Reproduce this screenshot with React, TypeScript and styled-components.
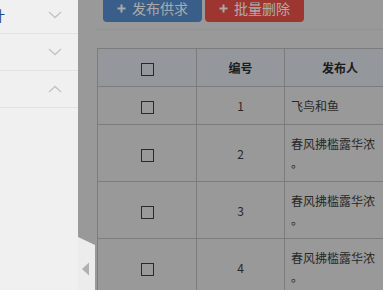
import React from "react";
import styled, { createGlobalStyle } from "styled-components";

const GlobalStyle = createGlobalStyle`
  html, body { margin: 0; padding: 0; }
  body {
    overflow: hidden;
    background: #dcdcdc;
    font-family: "Noto Sans CJK SC", "Noto Sans", sans-serif;
    width: 383px;
    height: 290px;
  }
`;

const Page = styled.main`
  padding-left: 97px;
  margin-top: -6px;
`;

const Toolbar = styled.div`
  display: flex;
  gap: 3px;
  padding: 0 0 7px 6px;
  border-bottom: 1px solid #d2d2d2;
`;

const ActionButton = styled.button<{ $tone: "primary" | "danger" }>`
  display: flex;
  align-items: center;
  justify-content: center;
  gap: 6px;
  width: 99px;
  height: 28px;
  padding: 0;
  border: none;
  border-radius: 4px;
  background: ${(p) => (p.$tone === "primary" ? "#5187c4" : "#e14c47")};
  color: #f4f4f4;
  font-family: inherit;
  font-size: 14px;
  line-height: 20px;
`;

const TableWrap = styled.div`
  padding-top: 18px;
`;

const Table = styled.table`
  width: 299px;
  table-layout: fixed;
  border-collapse: separate;
  border-spacing: 0;
  border-top: 1px solid #b2b2b2;
  border-left: 1px solid #b2b2b2;
  background: #dcdcdc;
`;

const Th = styled.th<{ $w: number }>`
  box-sizing: border-box;
  width: ${(p) => p.$w}px;
  padding: 9px 0;
  background: #d5dae0;
  border-right: 1px solid #b2b2b2;
  border-bottom: 1px solid #b2b2b2;
  color: #2a2a2a;
  font-size: 12px;
  font-weight: 700;
  line-height: 19px;
  text-align: center;
`;

const Td = styled.td<{ $align?: "left" | "center" }>`
  box-sizing: border-box;
  padding: ${(p) => (p.$align === "left" ? "9px 9px 9px 6px" : "9px 0")};
  border-right: 1px solid #b2b2b2;
  border-bottom: 1px solid #b2b2b2;
  color: #3a3a3a;
  font-size: 12px;
  line-height: 19px;
  text-align: ${(p) => p.$align ?? "center"};
  vertical-align: middle;
  line-break: anywhere;
`;

const Check = styled.span`
  display: inline-block;
  box-sizing: border-box;
  width: 13px;
  height: 13px;
  border: 1px solid #3c3c3c;
  vertical-align: middle;
`;

const Overlay = styled.div`
  position: fixed;
  inset: 0;
  background: rgba(0, 0, 0, 0.3);
  z-index: 10;
`;

const Drawer = styled.aside`
  position: fixed;
  left: 0;
  top: 0;
  bottom: 0;
  width: 78px;
  background: #f0f0f0;
  z-index: 20;
`;

const Menu = styled.nav`
  margin-top: -3px;
  overflow: hidden;
`;

const MenuRow = styled.div`
  display: flex;
  align-items: center;
  height: 36px;
  border-bottom: 1px solid #e2e2e2;
  overflow: hidden;
  padding-right: 16px;
`;

const MenuLabel = styled.span`
  flex: 1;
  margin-left: -51px;
  white-space: nowrap;
  color: #1f4a86;
  font-size: 14px;
`;

const Chevron = styled.svg`
  width: 14px;
  height: 8px;
  flex: none;
`;

const Handle = styled.div`
  position: absolute;
  left: 78px;
  top: 237px;
  bottom: 0;
  width: 17px;
  background: #ececec;
  clip-path: polygon(0 0, 100% 8px, 100% 100%, 0 100%);
  display: flex;
  align-items: flex-start;
  padding-top: 25px;
  box-sizing: border-box;
`;

const Arrow = styled.svg`
  margin-left: 4px;
  width: 8px;
  height: 14px;
`;

const Plus = () => (
  <svg width="9" height="9" viewBox="0 0 9 9">
    <path d="M4.5 0.5V8.5M0.5 4.5H8.5" stroke="#f4f4f4" strokeWidth="2" />
  </svg>
);

const ChevronIcon = ({ up }: { up?: boolean }) => (
  <Chevron viewBox="0 0 14 8">
    <path
      d={up ? "M1 7L7 1.5L13 7" : "M1 1L7 6.5L13 1"}
      fill="none"
      stroke="#c2c2c2"
      strokeWidth="1.3"
    />
  </Chevron>
);

const rows = [
  { id: 1, name: "飞鸟和鱼" },
  { id: 2, name: "春风拂槛露华浓。" },
  { id: 3, name: "春风拂槛露华浓。" },
  { id: 4, name: "春风拂槛露华浓。" },
];

export default function App() {
  return (
    <>
      <GlobalStyle />
      <Page>
        <Toolbar>
          <ActionButton $tone="primary">
            <Plus />
            发布供求
          </ActionButton>
          <ActionButton $tone="danger">
            <Plus />
            批量删除
          </ActionButton>
        </Toolbar>
        <TableWrap>
          <Table>
            <thead>
              <tr>
                <Th $w={99}>
                  <Check />
                </Th>
                <Th $w={88}>编号</Th>
                <Th $w={111}>发布人</Th>
              </tr>
            </thead>
            <tbody>
              {rows.map((r) => (
                <tr key={r.id}>
                  <Td>
                    <Check />
                  </Td>
                  <Td>{r.id}</Td>
                  <Td $align="left">{r.name}</Td>
                </tr>
              ))}
            </tbody>
          </Table>
        </TableWrap>
      </Page>
      <Overlay />
      <Drawer>
        <Menu>
          <MenuRow>
            <MenuLabel>信息统计</MenuLabel>
            <ChevronIcon />
          </MenuRow>
          <MenuRow>
            <MenuLabel />
            <ChevronIcon />
          </MenuRow>
          <MenuRow>
            <MenuLabel />
            <ChevronIcon up />
          </MenuRow>
        </Menu>
        <Handle>
          <Arrow viewBox="0 0 8 14">
            <path d="M0 7L7 0.5V13.5Z" fill="#b0b0b0" />
          </Arrow>
        </Handle>
      </Drawer>
    </>
  );
}
